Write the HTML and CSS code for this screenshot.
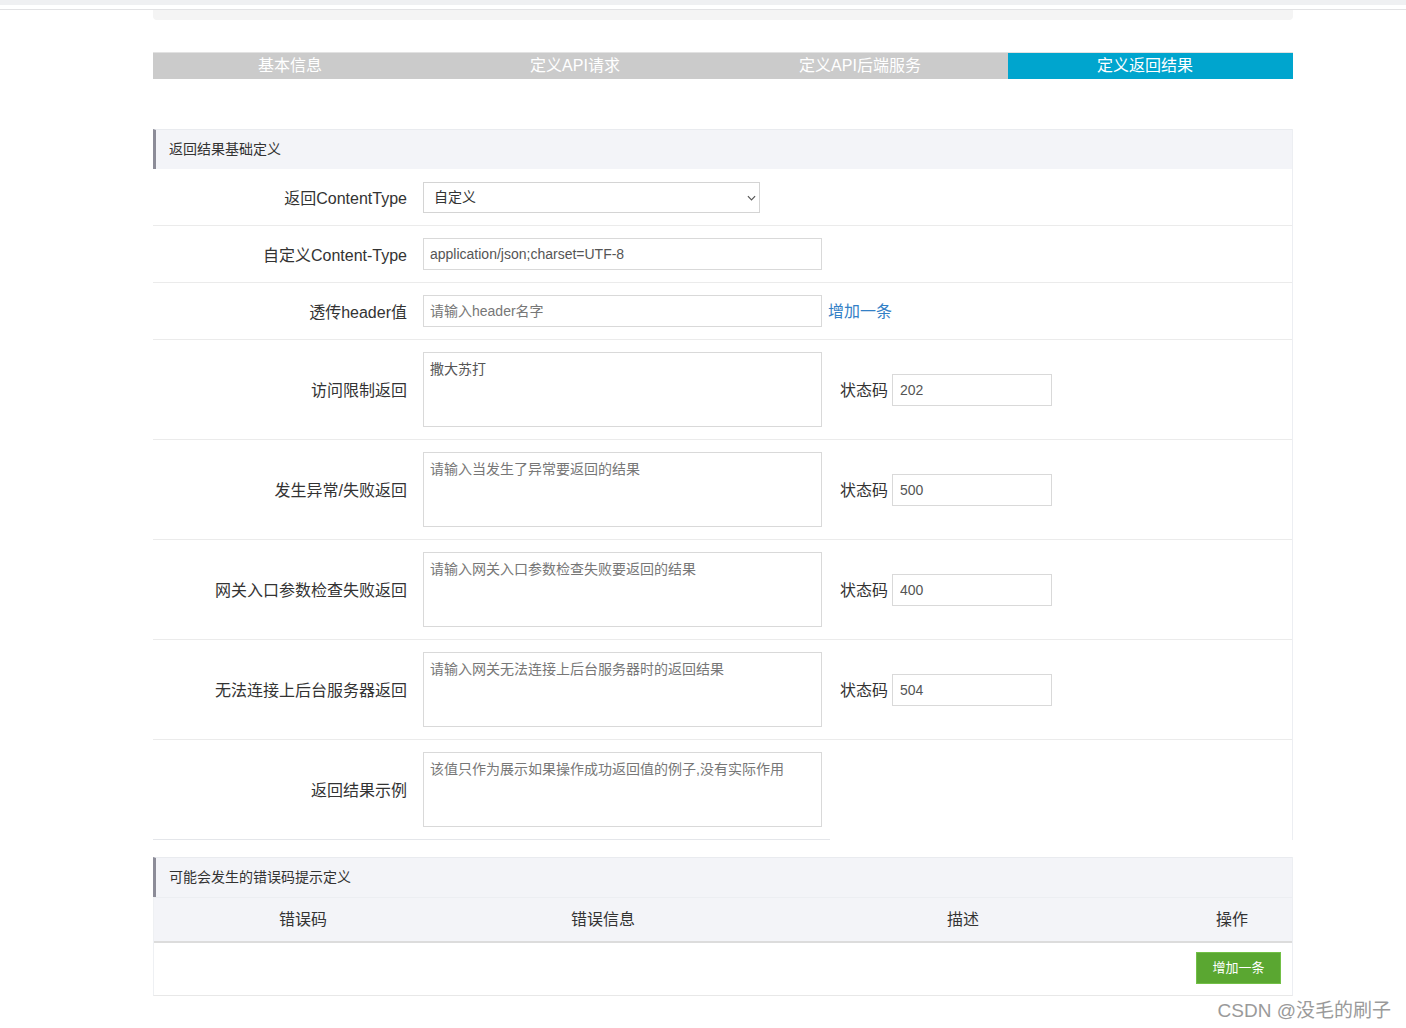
FILE: index.html
```html
<!DOCTYPE html>
<html lang="zh-CN">
<head>
<meta charset="utf-8">
<title>定义返回结果</title>
<link rel="stylesheet" href="styles.css">
</head>
<body>
<div class="topband"></div>
<div class="topline"></div>
<div class="wrap">
  <div class="topbox"></div>
  <div class="steps">
    <div class="step">基本信息</div>
    <div class="step">定义API请求</div>
    <div class="step">定义API后端服务</div>
    <div class="step active">定义返回结果</div>
  </div>

  <div class="section first">
    <div class="sec-head">返回结果基础定义</div>
    <div class="row">
      <label class="lbl">返回ContentType</label>
      <div class="ctrl">
        <div class="select-wrap">
          <select class="select"><option>自定义</option></select>
          <svg class="chev" width="10" height="6" viewBox="0 0 10 6"><path d="M1 1 L5 5 L9 1" fill="none" stroke="#555" stroke-width="1.3"/></svg>
        </div>
      </div>
    </div>
    <div class="row">
      <label class="lbl">自定义Content-Type</label>
      <div class="ctrl"><input class="inp" value="application/json;charset=UTF-8"></div>
    </div>
    <div class="row">
      <label class="lbl">透传header值</label>
      <div class="ctrl"><input class="inp" placeholder="请输入header名字"><a class="link">增加一条</a></div>
    </div>
    <div class="row tall">
      <label class="lbl">访问限制返回</label>
      <div class="ctrl"><textarea class="ta">撒大苏打</textarea><span class="code-lbl">状态码</span><input class="code" value="202"></div>
    </div>
    <div class="row tall">
      <label class="lbl">发生异常/失败返回</label>
      <div class="ctrl"><textarea class="ta" placeholder="请输入当发生了异常要返回的结果"></textarea><span class="code-lbl">状态码</span><input class="code" value="500"></div>
    </div>
    <div class="row tall">
      <label class="lbl">网关入口参数检查失败返回</label>
      <div class="ctrl"><textarea class="ta" placeholder="请输入网关入口参数检查失败要返回的结果"></textarea><span class="code-lbl">状态码</span><input class="code" value="400"></div>
    </div>
    <div class="row tall">
      <label class="lbl">无法连接上后台服务器返回</label>
      <div class="ctrl"><textarea class="ta" placeholder="请输入网关无法连接上后台服务器时的返回结果"></textarea><span class="code-lbl">状态码</span><input class="code" value="504"></div>
    </div>
    <div class="row tall last">
      <label class="lbl">返回结果示例</label>
      <div class="ctrl"><textarea class="ta" placeholder="该值只作为展示如果操作成功返回值的例子,没有实际作用"></textarea></div>
    </div>
    <div class="endline"></div>
  </div>

  <div class="section second">
    <div class="sec-head">可能会发生的错误码提示定义</div>
    <div class="thead">
      <div>错误码</div>
      <div>错误信息</div>
      <div>描述</div>
      <div>操作</div>
    </div>
    <div class="tbody">
      <button class="btn">增加一条</button>
    </div>
  </div>
</div>
<div class="watermark">CSDN @没毛的刷子</div>
</body>
</html>
```

FILE: styles.css
```css
* { box-sizing: border-box; }
html, body {
  margin: 0;
  padding: 0;
  background: #fff;
  font-family: "Liberation Sans", Arial, "Noto Sans CJK SC", sans-serif;
  color: #333;
}
body { position: relative; min-height: 1028px; }

.topband { height: 5px; background: #eff0f2; }
.topline { margin-top: 4px; height: 1px; background: #e2e2e4; }

.wrap { width: 1140px; margin-left: 153px; }

.topbox {
  height: 10px;
  background: #f4f4f4;
  border-radius: 0 0 4px 4px;
}

.steps {
  margin-top: 32px;
  display: grid;
  grid-template-columns: repeat(4, 1fr);
  border-top: 1px solid #e2e2e2;
  background: #cbcbcb;
}
.step {
  height: 26px;
  line-height: 26px;
  text-align: center;
  color: #fff;
  font-size: 16px;
  padding-right: 11px;
}
.step.active { background: #00a5ce; }

.section { border-right: 1px solid #eceef2; }
.section.first { margin-top: 50px; }
.section.second { margin-top: 17px; border-left: 1px solid #eef0f3; border-bottom: 1px solid #e8e8e8; }

.sec-head {
  height: 40px;
  line-height: 38px;
  background: #f3f4f8;
  border-top: 1px solid #e9ebef;
  border-left: 3px solid #8c8c98;
  padding-left: 13px;
  font-size: 14px;
  color: #333;
}
.section.second .sec-head { margin-left: -1px; }

.row {
  display: flex;
  align-items: center;
  height: 57px;
  border-bottom: 1px solid #ebebeb;
}
.row.tall { height: 100px; }
.row.last { border-bottom: none; height: 99px; }

.lbl {
  width: 254px;
  text-align: right;
  font-size: 16px;
  color: #333;
  margin-top: -1px;
}
.ctrl {
  margin-left: 16px;
  display: flex;
  align-items: center;
}

.select-wrap { position: relative; display: flex; }
.select {
  width: 337px;
  height: 31px;
  border: 1px solid #d4d4d4;
  background: #fff;
  font-family: "Liberation Sans", Arial, "Noto Sans CJK SC", sans-serif;
  font-size: 14px;
  color: #333;
  padding: 0 10px;
  border-radius: 0;
  appearance: none;
  -webkit-appearance: none;
  outline: none;
}
.chev {
  position: absolute;
  right: 4px;
  top: 13px;
  width: 9px;
  height: 6px;
  pointer-events: none;
}

.inp {
  width: 399px;
  height: 32px;
  border: 1px solid #d9d9d9;
  padding: 0 6px;
  font-family: "Liberation Sans", Arial, "Noto Sans CJK SC", sans-serif;
  font-size: 14px;
  color: #555;
  outline: none;
}
.inp::placeholder, .ta::placeholder { color: #777; opacity: 1; }

.link {
  margin-left: 6px;
  color: #3380c6;
  font-size: 16px;
  cursor: pointer;
  margin-top: -2px;
}

.ta {
  width: 399px;
  height: 75px;
  border: 1px solid #d9d9d9;
  padding: 7px 6px;
  font-family: "Liberation Sans", Arial, "Noto Sans CJK SC", sans-serif;
  font-size: 14px;
  line-height: 18px;
  color: #555;
  resize: none;
  outline: none;
}

.code-lbl {
  margin-left: 18px;
  margin-right: 4px;
  font-size: 16px;
  color: #333;
  margin-top: -1px;
}
.code {
  width: 160px;
  height: 32px;
  border: 1px solid #d9d9d9;
  padding: 0 7px;
  font-family: "Liberation Sans", Arial, "Noto Sans CJK SC", sans-serif;
  font-size: 14px;
  color: #555;
  outline: none;
}

.endline {
  width: 677px;
  height: 1px;
  background: #e4e6ea;
}

.thead {
  display: grid;
  grid-template-columns: 298px 302px 418px 1fr;
  height: 46px;
  background: #f3f4f8;
  border-top: 1px solid #eceef2;
  border-bottom: 2px solid #dcdcdc;
  align-items: center;
  text-align: center;
  font-size: 16px;
  color: #333;
  padding-bottom: 3px;
}

.tbody {
  height: 52px;
  display: flex;
  justify-content: flex-end;
  align-items: flex-start;
  padding-top: 9px;
  padding-right: 11px;
}
.btn {
  width: 85px;
  height: 32px;
  background: #5aa731;
  border: 1px solid #72c046;
  color: #fff;
  font-family: "Liberation Sans", Arial, "Noto Sans CJK SC", sans-serif;
  font-size: 13px;
  padding: 0 0 4px;
}

.watermark {
  position: absolute;
  right: 15px;
  bottom: 6px;
  font-size: 19px;
  color: #9a9a9a;
  font-family: "Liberation Sans", Arial, "Noto Sans CJK SC", sans-serif;
}
```
